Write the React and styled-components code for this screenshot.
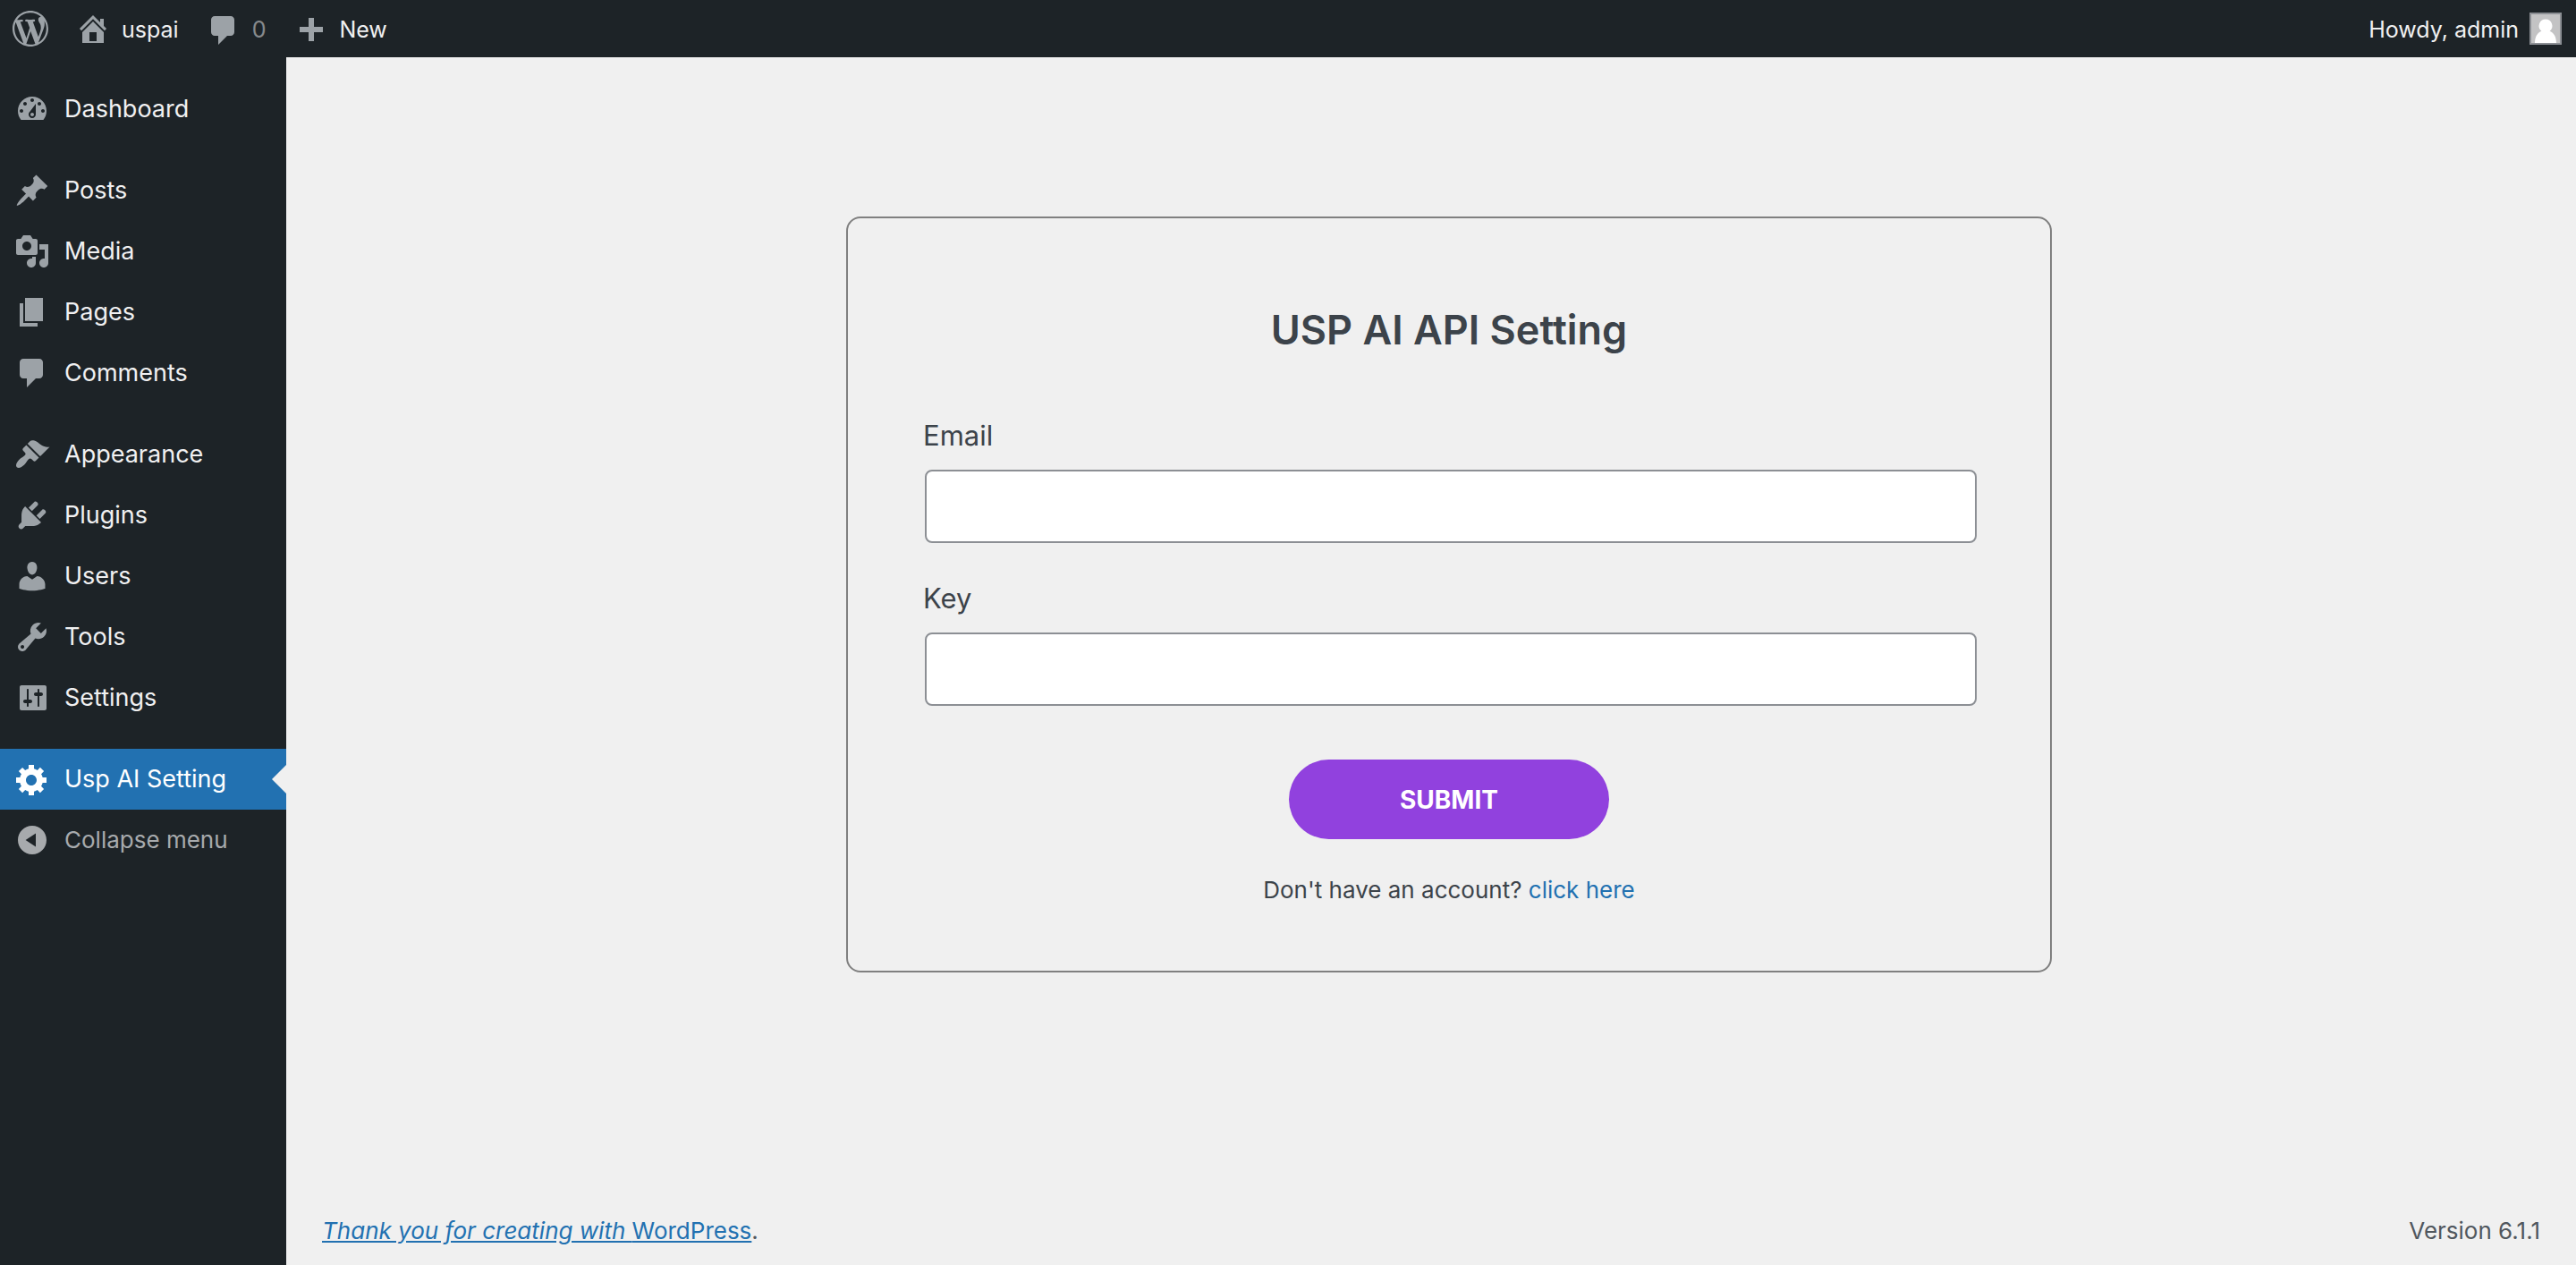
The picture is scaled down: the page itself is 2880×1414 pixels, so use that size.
import React from "react";
import styled, { createGlobalStyle, css } from "styled-components";

const GlobalStyle = createGlobalStyle`
  *, *::before, *::after { box-sizing: border-box; }
  body {
    margin: 0;
    background: #f0f0f0;
    color: #3c434a;
    font-family: Inter, "Liberation Sans", sans-serif;
    font-size: 26px;
    line-height: 36px;
  }
  a { color: #2271b1; }
`;

const ICON = {
  wordpress:
    "M20 10c0-5.51-4.49-10-10-10C4.48 0 0 4.49 0 10c0 5.52 4.48 10 10 10 5.51 0 10-4.48 10-10zM7.78 15.37L4.37 6.22c.55-.02 1.17-.08 1.17-.08.5-.06.44-1.13-.06-1.11 0 0-1.45.11-2.37.11-.18 0-.37 0-.58-.01C4.12 2.69 6.87 1.11 10 1.11c2.33 0 4.45.87 6.05 2.34-.68-.11-1.65.39-1.65 1.58 0 .74.45 1.36.9 2.1.35.61.55 1.36.55 2.46 0 1.49-1.4 5-1.4 5l-3.03-8.37c.54-.02.82-.17.82-.17.5-.05.44-1.25-.06-1.22 0 0-1.44.12-2.38.12-.87 0-2.33-.12-2.33-.12-.5-.03-.56 1.2-.06 1.22l.92.08 1.26 3.41zM17.41 10c.24-.64.74-1.87.43-4.25.7 1.29 1.05 2.71 1.05 4.25 0 3.29-1.73 6.24-4.4 7.78.97-2.59 1.94-5.2 2.92-7.78zM6.1 18.09C3.12 16.65 1.11 13.53 1.11 10c0-1.3.23-2.48.72-3.59C3.25 10.3 4.67 14.2 6.1 18.09zm4.03-6.63l2.58 6.98c-.86.29-1.76.45-2.71.45-.79 0-1.57-.11-2.29-.33.81-2.38 1.62-4.74 2.42-7.1z",
  home: "M16 8.5l1.53 1.53-1.06 1.06L10 4.6l-6.47 6.49-1.06-1.06L10 2.5l4 4v-2h2v4zm-6-2.46l6 5.99V18H4v-5.97zM12 17v-5H8v5h4z",
  plus: "M17 7v3h-5v5H9v-5H4V7h5V2h3v5h5z",
  dashboard:
    "M3.76 16h12.48c1.1-1.37 1.76-3.11 1.76-5 0-4.42-3.58-8-8-8s-8 3.58-8 8c0 1.89.66 3.63 1.76 5zM10 4c.55 0 1 .45 1 1s-.45 1-1 1-1-.45-1-1 .45-1 1-1zM6 6c.55 0 1 .45 1 1s-.45 1-1 1-1-.45-1-1 .45-1 1-1zm8 0c.55 0 1 .45 1 1s-.45 1-1 1-1-.45-1-1 .45-1 1-1zm-5.37 5.55L12 7v6c0 1.1-.9 2-2 2s-2-.9-2-2c0-.57.24-1.08.63-1.45zM4 10c.55 0 1 .45 1 1s-.45 1-1 1-1-.45-1-1 .45-1 1-1zm12 0c.55 0 1 .45 1 1s-.45 1-1 1-1-.45-1-1 .45-1 1-1zm-5 3c0-.55-.45-1-1-1s-1 .45-1 1 .45 1 1 1 1-.45 1-1z",
  post: "M10.44 3.02l1.82-1.82 6.36 6.35-1.83 1.82c-1.05-.68-2.48-.57-3.41.36l-.75.75c-.92.93-1.04 2.35-.35 3.41l-1.83 1.82-2.41-2.41-2.8 2.79c-.42.42-3.38 2.71-3.8 2.29s1.86-3.39 2.28-3.81l2.79-2.79L4.1 9.36l1.83-1.82c1.05.69 2.48.57 3.4-.36l.75-.75c.93-.92 1.05-2.35.36-3.41z",
  media:
    "M13 11V4c0-.55-.45-1-1-1h-1.67L9 1H5L3.67 3H2c-.55 0-1 .45-1 1v7c0 .55.45 1 1 1h10c.55 0 1-.45 1-1zM7 4.5c1.38 0 2.5 1.12 2.5 2.5S8.38 9.5 7 9.5 4.5 8.38 4.5 7 5.62 4.5 7 4.5zM14 6h5v10.5c0 1.38-1.12 2.5-2.5 2.5S14 17.88 14 16.5s1.12-2.5 2.5-2.5c.17 0 .34.02.5.05V9h-3V6zm-4 8.05V13h2v3.5c0 1.38-1.12 2.5-2.5 2.5S7 17.88 7 16.5 8.12 14 9.5 14c.17 0 .34.02.5.05z",
  page: "M6 15V2h10v13H6zm-1 1h8v2H3V5h2v11z",
  comments:
    "M5 2h9c1.1 0 2 .9 2 2v7c0 1.1-.9 2-2 2h-2l-5 5v-5H5c-1.1 0-2-.9-2-2V4c0-1.1.9-2 2-2z",
  appearance:
    "M14.48 11.06L7.41 3.99l1.5-1.5c.5-.56 2.3-.47 3.51.32 1.21.8 1.43 1.28 2.91 2.1 1.18.64 2.45 1.26 4.45.85zm-.71.71L6.7 4.7 4.93 6.47c-.39.39-.39 1.02 0 1.41l1.06 1.06c.39.39.39 1.03 0 1.42-.6.6-1.43 1.11-2.21 1.69-.35.26-.7.53-1.01.84C1.43 14.23.4 16.08 1.4 17.07c.99 1 2.84-.03 4.18-1.36.31-.31.58-.66.85-1.02.57-.78 1.08-1.61 1.69-2.21.39-.39 1.02-.39 1.41 0l1.06 1.06c.39.39 1.02.39 1.41 0z",
  plugins:
    "M13.11 4.36L9.87 7.6 8 5.73l3.24-3.24c.35-.34 1.05-.2 1.56.32.52.51.66 1.21.31 1.55zm-8 1.77l.91-1.12 9.01 9.01-1.19.84c-.71.71-2.63 1.16-3.82 1.16H6.14L4.9 17.26c-.59.59-1.54.59-2.12 0-.59-.58-.59-1.53 0-2.12l1.24-1.24v-3.88c0-1.13.4-3.19 1.09-3.89zm7.26 3.97l3.24-3.24c.34-.35 1.04-.21 1.55.31.52.51.66 1.21.31 1.55l-3.24 3.25z",
  users:
    "M10 9.25c-2.27 0-2.73-3.44-2.73-3.44C7 4.02 7.82 2 9.97 2c2.16 0 2.98 2.02 2.71 3.81 0 0-.41 3.44-2.68 3.44zm0 2.57L12.72 10c2.39 0 4.52 2.33 4.52 4.53v2.49s-3.65 1.13-7.24 1.13c-3.65 0-7.24-1.13-7.24-1.13v-2.49c0-2.25 1.94-4.48 4.47-4.48z",
  tools:
    "M16.68 9.77c-1.34 1.34-3.3 1.67-4.95.99l-5.41 6.52c-.99.99-2.59.99-3.58 0s-.99-2.59 0-3.57l6.52-5.42c-.68-1.65-.35-3.61.99-4.95 1.28-1.28 3.12-1.62 4.72-1.06l-2.89 2.89 2.82 2.82 2.86-2.87c.53 1.58.18 3.39-1.08 4.65zM3.81 16.21c.4.39 1.04.39 1.43 0 .4-.4.4-1.04 0-1.43-.39-.4-1.03-.4-1.43 0-.39.39-.39 1.03 0 1.43z",
  settings:
    "M18 16V4c0-.55-.45-1-1-1H4c-.55 0-1 .45-1 1v12c0 .55.45 1 1 1h13c.55 0 1-.45 1-1zM8 11h1c.55 0 1 .45 1 1s-.45 1-1 1H8v1.5c0 .28-.22.5-.5.5s-.5-.22-.5-.5V13H6c-.55 0-1-.45-1-1s.45-1 1-1h1V5.5c0-.28.22-.5.5-.5s.5.22.5.5V11zm5-2h-1c-.55 0-1-.45-1-1s.45-1 1-1h1V5.5c0-.28.22-.5.5-.5s.5.22.5.5V7h1c.55 0 1 .45 1 1s-.45 1-1 1h-1v5.5c0 .28-.22.5-.5.5s-.5-.22-.5-.5V9z",
  generic:
    "M18 12h-2.18c-.17.7-.44 1.35-.81 1.93l1.54 1.54-2.1 2.1-1.54-1.54c-.58.36-1.23.63-1.91.79V19H8v-2.18c-.68-.16-1.33-.43-1.91-.79l-1.54 1.54-2.12-2.12 1.54-1.54c-.36-.58-.63-1.23-.79-1.91H1V9.03h2.17c.16-.7.44-1.35.8-1.94L2.43 5.55l2.1-2.1 1.54 1.54c.58-.37 1.24-.64 1.93-.81V2h3v2.18c.68.16 1.33.43 1.91.79l1.54-1.54 2.12 2.12-1.54 1.54c.36.59.64 1.24.8 1.94H18V12zm-8.5 1.5c1.66 0 3-1.34 3-3s-1.34-3-3-3-3 1.34-3 3 1.34 3 3 3z",
  collapse:
    "M10 2c4.42 0 8 3.58 8 8s-3.58 8-8 8-8-3.58-8-8 3.58-8 8-8zM12 6.3L6.3 10 12 13.7z",
};

const Glyph = styled.svg`
  flex: none;
  width: 40px;
  height: 40px;
  fill: currentColor;
  fill-rule: evenodd;
`;

const Icon = ({ name }) => (
  <Glyph viewBox="0 0 20 20" aria-hidden="true">
    <path d={ICON[name]} />
  </Glyph>
);

const Page = styled.div`
  display: flex;
  flex-direction: column;
  min-height: 100vh;
`;

const AdminBar = styled.header`
  display: flex;
  align-items: center;
  justify-content: space-between;
  height: 64px;
  padding: 0 16px 0 14px;
  background: #1d2327;
  font-size: 25px;
`;

const BarGroup = styled.nav`
  display: flex;
  align-items: center;
  gap: 30px;
`;

const BarLink = styled.a`
  display: flex;
  align-items: center;
  gap: 12px;
  color: #f0f0f1;
  text-decoration: none;

  svg { color: #9ca2a7; }
`;

const BarText = styled.span`
  padding-top: 2px;
  opacity: ${(p) => (p.$muted ? 0.5 : 1)};
`;

const LowGlyph = styled.span`
  display: flex;
  padding-top: ${(p) => p.$drop}px;
`;

const Avatar = styled.svg`
  width: 36px;
  height: 36px;
  border: 2px solid #8c8f94;
  background: #c3c3c4;
`;

const Body = styled.div`
  flex: 1;
  display: flex;
`;

const Sidebar = styled.nav`
  flex: none;
  width: 320px;
  padding-top: 24px;
  background: #1d2327;
`;

const MenuGroup = styled.ul`
  list-style: none;
  margin: 0;
  padding: 0;

  & + & { margin-top: 23px; }
`;

const row = css`
  position: relative;
  display: flex;
  align-items: center;
  gap: 16px;
  width: 100%;
  padding: 0 16px;
  text-align: left;
`;

const MenuLink = styled.a`
  ${row}
  height: 68px;
  font-size: 27px;
  text-decoration: none;
  color: ${(p) => (p.$active ? "#ffffff" : "#f0f0f1")};
  background: ${(p) => (p.$active ? "#2271b1" : "transparent")};

  svg { color: ${(p) => (p.$active ? "#ffffff" : "#9ca2a7")}; }

  &::after {
    content: "";
    display: ${(p) => (p.$active ? "block" : "none")};
    position: absolute;
    right: 0;
    border: 16px solid transparent;
    border-left-width: 0;
    border-right-color: #f0f0f0;
  }
`;

const CollapseButton = styled.button`
  ${row}
  height: 68px;
  border: 0;
  background: none;
  color: #a7aaad;
  font: inherit;
`;

const Content = styled.div`
  flex: 1;
  display: flex;
  flex-direction: column;
`;

const Main = styled.main`
  flex: 1;
  display: flex;
  justify-content: center;
  align-items: flex-start;
  padding: 178px 40px 40px 80px;
`;

const Card = styled.form`
  display: flex;
  flex-direction: column;
  align-items: center;
  width: 100%;
  max-width: 1348px;
  padding: 95px 84px 72px;
  border: 2px solid #808080;
  border-radius: 16px;
`;

const Title = styled.h1`
  margin: 0 0 68px;
  font-size: 45px;
  line-height: 60px;
  font-weight: 600;
`;

const Field = styled.div`
  display: flex;
  flex-direction: column;
  width: 100%;
  margin-bottom: 42px;
`;

const Label = styled.label`
  margin-bottom: 18px;
  font-size: 31px;
  line-height: 40px;
`;

const TextInput = styled.input`
  width: 100%;
  height: 82px;
  margin-left: 2px;
  padding: 0 16px;
  border: 2px solid #8c8f94;
  border-radius: 8px;
  background: #ffffff;
  color: #2c3338;
  font: inherit;
`;

const SubmitButton = styled.button`
  width: 358px;
  height: 89px;
  margin: 18px 0 39px;
  border: 0;
  border-radius: 45px;
  background: #9141de;
  color: #ffffff;
  font: inherit;
  font-size: 28px;
  font-weight: 700;
`;

const Hint = styled.p`
  margin: 0;

  a { text-decoration: none; }
`;

const Footer = styled.footer`
  display: flex;
  justify-content: space-between;
  padding: 20px 40px;
  color: #50575e;
`;

const menu = [
  [["dashboard", "Dashboard"]],
  [["post", "Posts"], ["media", "Media"], ["page", "Pages"], ["comments", "Comments"]],
  [
    ["appearance", "Appearance"],
    ["plugins", "Plugins"],
    ["users", "Users"],
    ["tools", "Tools"],
    ["settings", "Settings"],
  ],
  [["generic", "Usp AI Setting", true]],
];

export default function App() {
  return (
    <Page>
      <GlobalStyle />
      <AdminBar>
        <BarGroup aria-label="Toolbar">
          <BarLink href="#about" aria-label="About WordPress">
            <Icon name="wordpress" />
          </BarLink>
          <BarLink href="#site">
            <Icon name="home" />
            <BarText>uspai</BarText>
          </BarLink>
          <BarLink href="#comments">
            <LowGlyph $drop={4}>
              <Icon name="comments" />
            </LowGlyph>
            <BarText $muted>0</BarText>
          </BarLink>
          <BarLink href="#new">
            <LowGlyph $drop={8}>
              <Icon name="plus" />
            </LowGlyph>
            <BarText>New</BarText>
          </BarLink>
        </BarGroup>
        <BarLink href="#profile">
          <BarText>Howdy, admin</BarText>
          <Avatar viewBox="0 0 32 32" aria-hidden="true">
            <path
              fill="#ffffff"
              d="M16 5.500a7.400 7.400 0 0 1 4.600 13.200c4.200 1.800 7.400 6 7.400 13.300H4c0-7.300 3.200-11.500 7.400-13.300A7.400 7.400 0 0 1 16 5.500z"
            />
          </Avatar>
        </BarLink>
      </AdminBar>
      <Body>
        <Sidebar aria-label="Main menu">
          {menu.map((group) => (
            <MenuGroup key={group[0][1]}>
              {group.map(([icon, label, active]) => (
                <li key={label}>
                  <MenuLink
                    href={`#${icon}`}
                    $active={active}
                    aria-current={active ? "page" : undefined}
                  >
                    <Icon name={icon} />
                    {label}
                  </MenuLink>
                </li>
              ))}
            </MenuGroup>
          ))}
          <CollapseButton type="button">
            <Icon name="collapse" />
            Collapse menu
          </CollapseButton>
        </Sidebar>
        <Content>
          <Main>
            <Card onSubmit={(e) => e.preventDefault()}>
              <Title>USP AI API Setting</Title>
              <Field>
                <Label htmlFor="email">Email</Label>
                <TextInput id="email" type="text" />
              </Field>
              <Field>
                <Label htmlFor="key">Key</Label>
                <TextInput id="key" type="text" />
              </Field>
              <SubmitButton type="submit">SUBMIT</SubmitButton>
              <Hint>
                Don't have an account? <a href="#register">click here</a>
              </Hint>
            </Card>
          </Main>
          <Footer>
            <span>
              <a href="#wordpress">
                <em>Thank you for creating with </em>WordPress
              </a>
              .
            </span>
            <span>Version 6.1.1</span>
          </Footer>
        </Content>
      </Body>
    </Page>
  );
}
